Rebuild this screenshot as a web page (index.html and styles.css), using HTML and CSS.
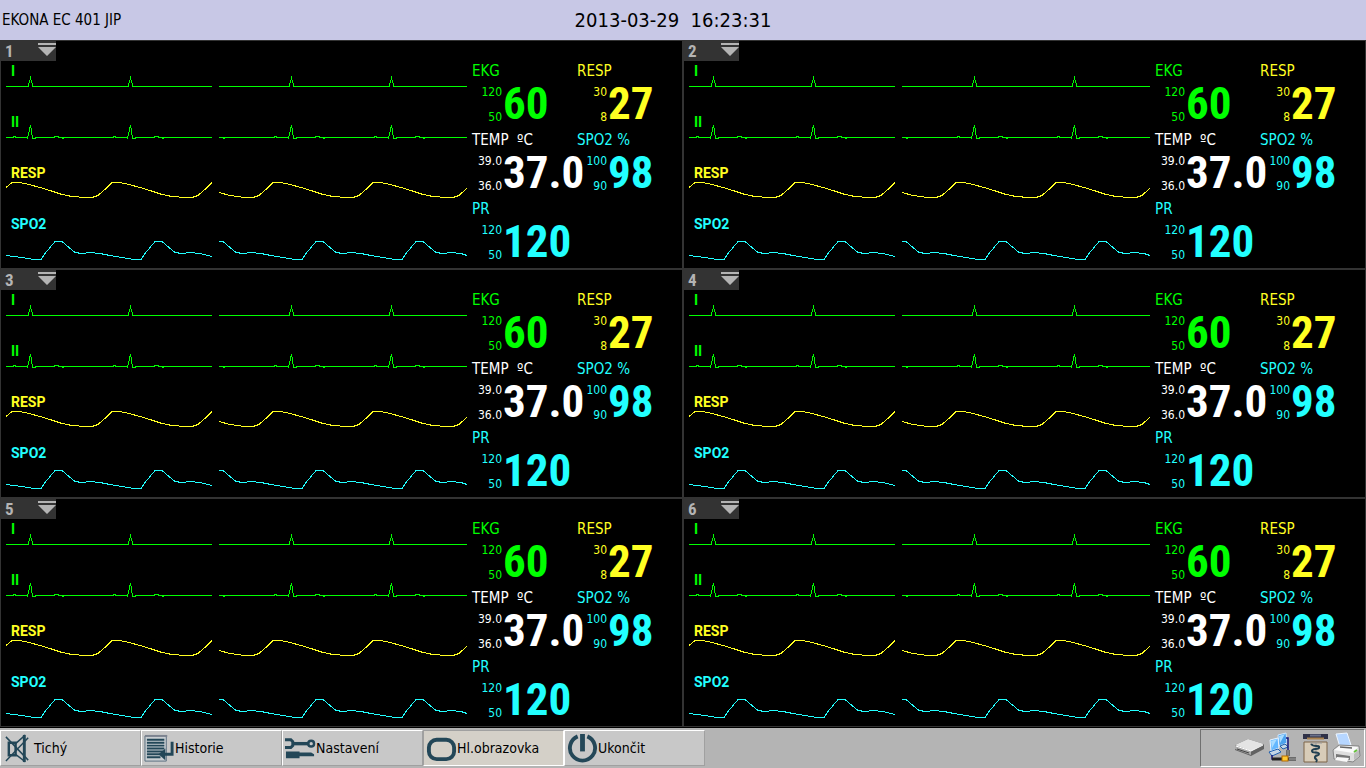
FILE: index.html
```
<!DOCTYPE html>
<html lang="cs">
<head>
<meta charset="utf-8">
<title>EKONA EC 401 JIP</title>
<link rel="stylesheet" href="styles.css">
</head>
<body>
<svg class="defs" aria-hidden="true">
  <symbol id="w-ecg1" viewBox="0 0 461 51" preserveAspectRatio="none">
    <path d="M0 25.5H22L24.5 17L27 25.5H122L124.5 17L127 25.5H206M213 25.5H283L285.5 17L288 25.5H383L385.5 17L388 25.5H461"/>
  </symbol>
  <symbol id="w-ecg2" viewBox="0 0 461 51" preserveAspectRatio="none">
    <path d="M0 25.5H7V24.5H9V25.5H20L21.5 26.5L24.5 13L26.5 26.5H29V25.5H48V24.5H52V25.5H56V26.5H57V25.5H107V24.5H109V25.5H120L121.5 26.5L124.5 13L126.5 26.5H129V25.5H148V24.5H152V25.5H156V26.5H157V25.5H206M213 25.5H217V26.5H218V25.5H268V24.5H270V25.5H281L282.5 26.5L285.5 13L287.5 26.5H290V25.5H309V24.5H313V25.5H317V26.5H318V25.5H368V24.5H370V25.5H381L382.5 26.5L385.5 13L387.5 26.5H390V25.5H409V24.5H413V25.5H417V26.5H418V25.5H461"/>
  </symbol>
  <symbol id="w-resp" viewBox="0 0 461 51" preserveAspectRatio="none">
    <path d="M0 24.5L6 19.5H14L23 21.5L34 24.5L44 27.5L56 31.5L66 33.5L79 34.5H86L92 32.5L100 25.5L106 19.5H114L123 21.5L134 24.5L144 27.5L156 31.5L166 33.5L179 34.5H186L192 32.5L200 25.5L206 19.5M213 29.5L224 32.5L239 34.5H247L253 32.5L261 25.5L267 19.5H275L284 21.5L295 24.5L305 27.5L317 31.5L327 33.5L340 34.5H347L353 32.5L361 25.5L367 19.5H375L384 21.5L395 24.5L405 27.5L417 31.5L427 33.5L440 34.5H447L453 32.5L461 25"/>
  </symbol>
  <symbol id="w-spo2" viewBox="0 0 461 51" preserveAspectRatio="none">
    <path d="M0 41.5L16 43.5L28 45.5H35L39 39.5L49 27.5H56L69 38.5L76 39.5L84 38.5L94 39.5L104 41.5L116 43.5L128 45.5H135L139 39.5L149 27.5H156L169 38.5L176 39.5L184 38.5L194 39.5L206 42.5M213 27.5H217L230 38.5L237 39.5L245 38.5L255 39.5L265 41.5L277 43.5L289 45.5H296L300 39.5L310 27.5H317L330 38.5L337 39.5L345 38.5L355 39.5L365 41.5L377 43.5L389 45.5H396L400 39.5L410 27.5H417L430 38.5L437 39.5L445 38.5L455 39.5L461 41.5"/>
  </symbol>
  <symbol id="i-menu" viewBox="0 0 18 13">
    <path d="M0 0H18V2H0ZM0 4H18L9 13Z"/>
  </symbol>
</svg>

<header class="topbar">
  <h1 class="station">EKONA EC 401 JIP</h1>
  <time class="clock" datetime="2013-03-29T16:23:31">2013-03-29&nbsp; 16:23:31</time>
</header>

<main class="beds">
  <section class="bed">
    <button class="bed-tab" aria-label="Menu 1"><span>1</span><svg><use href="#i-menu"/></svg></button>
    <div class="waves">
      <div class="wave green"><span>I</span><svg><use href="#w-ecg1"/></svg></div>
      <div class="wave green"><span>II</span><svg><use href="#w-ecg2"/></svg></div>
      <div class="wave yellow"><span>RESP</span><svg><use href="#w-resp"/></svg></div>
      <div class="wave cyan"><span>SPO2</span><svg><use href="#w-spo2"/></svg></div>
    </div>
    <div class="vitals">
      <div class="vital green"><h2>EKG</h2><div class="limits"><span>120</span><span>50</span></div><strong>60</strong></div>
      <div class="vital yellow"><h2>RESP</h2><div class="limits"><span>30</span><span>8</span></div><strong>27</strong></div>
      <div class="vital white"><h2>TEMP&nbsp; ºC</h2><div class="limits"><span>39.0</span><span>36.0</span></div><strong>37.0</strong></div>
      <div class="vital cyan"><h2>SPO2 %</h2><div class="limits"><span>100</span><span>90</span></div><strong>98</strong></div>
      <div class="vital cyan"><h2>PR</h2><div class="limits"><span>120</span><span>50</span></div><strong>120</strong></div>
    </div>
  </section>
  <section class="bed">
    <button class="bed-tab" aria-label="Menu 2"><span>2</span><svg><use href="#i-menu"/></svg></button>
    <div class="waves">
      <div class="wave green"><span>I</span><svg><use href="#w-ecg1"/></svg></div>
      <div class="wave green"><span>II</span><svg><use href="#w-ecg2"/></svg></div>
      <div class="wave yellow"><span>RESP</span><svg><use href="#w-resp"/></svg></div>
      <div class="wave cyan"><span>SPO2</span><svg><use href="#w-spo2"/></svg></div>
    </div>
    <div class="vitals">
      <div class="vital green"><h2>EKG</h2><div class="limits"><span>120</span><span>50</span></div><strong>60</strong></div>
      <div class="vital yellow"><h2>RESP</h2><div class="limits"><span>30</span><span>8</span></div><strong>27</strong></div>
      <div class="vital white"><h2>TEMP&nbsp; ºC</h2><div class="limits"><span>39.0</span><span>36.0</span></div><strong>37.0</strong></div>
      <div class="vital cyan"><h2>SPO2 %</h2><div class="limits"><span>100</span><span>90</span></div><strong>98</strong></div>
      <div class="vital cyan"><h2>PR</h2><div class="limits"><span>120</span><span>50</span></div><strong>120</strong></div>
    </div>
  </section>
  <section class="bed">
    <button class="bed-tab" aria-label="Menu 3"><span>3</span><svg><use href="#i-menu"/></svg></button>
    <div class="waves">
      <div class="wave green"><span>I</span><svg><use href="#w-ecg1"/></svg></div>
      <div class="wave green"><span>II</span><svg><use href="#w-ecg2"/></svg></div>
      <div class="wave yellow"><span>RESP</span><svg><use href="#w-resp"/></svg></div>
      <div class="wave cyan"><span>SPO2</span><svg><use href="#w-spo2"/></svg></div>
    </div>
    <div class="vitals">
      <div class="vital green"><h2>EKG</h2><div class="limits"><span>120</span><span>50</span></div><strong>60</strong></div>
      <div class="vital yellow"><h2>RESP</h2><div class="limits"><span>30</span><span>8</span></div><strong>27</strong></div>
      <div class="vital white"><h2>TEMP&nbsp; ºC</h2><div class="limits"><span>39.0</span><span>36.0</span></div><strong>37.0</strong></div>
      <div class="vital cyan"><h2>SPO2 %</h2><div class="limits"><span>100</span><span>90</span></div><strong>98</strong></div>
      <div class="vital cyan"><h2>PR</h2><div class="limits"><span>120</span><span>50</span></div><strong>120</strong></div>
    </div>
  </section>
  <section class="bed">
    <button class="bed-tab" aria-label="Menu 4"><span>4</span><svg><use href="#i-menu"/></svg></button>
    <div class="waves">
      <div class="wave green"><span>I</span><svg><use href="#w-ecg1"/></svg></div>
      <div class="wave green"><span>II</span><svg><use href="#w-ecg2"/></svg></div>
      <div class="wave yellow"><span>RESP</span><svg><use href="#w-resp"/></svg></div>
      <div class="wave cyan"><span>SPO2</span><svg><use href="#w-spo2"/></svg></div>
    </div>
    <div class="vitals">
      <div class="vital green"><h2>EKG</h2><div class="limits"><span>120</span><span>50</span></div><strong>60</strong></div>
      <div class="vital yellow"><h2>RESP</h2><div class="limits"><span>30</span><span>8</span></div><strong>27</strong></div>
      <div class="vital white"><h2>TEMP&nbsp; ºC</h2><div class="limits"><span>39.0</span><span>36.0</span></div><strong>37.0</strong></div>
      <div class="vital cyan"><h2>SPO2 %</h2><div class="limits"><span>100</span><span>90</span></div><strong>98</strong></div>
      <div class="vital cyan"><h2>PR</h2><div class="limits"><span>120</span><span>50</span></div><strong>120</strong></div>
    </div>
  </section>
  <section class="bed">
    <button class="bed-tab" aria-label="Menu 5"><span>5</span><svg><use href="#i-menu"/></svg></button>
    <div class="waves">
      <div class="wave green"><span>I</span><svg><use href="#w-ecg1"/></svg></div>
      <div class="wave green"><span>II</span><svg><use href="#w-ecg2"/></svg></div>
      <div class="wave yellow"><span>RESP</span><svg><use href="#w-resp"/></svg></div>
      <div class="wave cyan"><span>SPO2</span><svg><use href="#w-spo2"/></svg></div>
    </div>
    <div class="vitals">
      <div class="vital green"><h2>EKG</h2><div class="limits"><span>120</span><span>50</span></div><strong>60</strong></div>
      <div class="vital yellow"><h2>RESP</h2><div class="limits"><span>30</span><span>8</span></div><strong>27</strong></div>
      <div class="vital white"><h2>TEMP&nbsp; ºC</h2><div class="limits"><span>39.0</span><span>36.0</span></div><strong>37.0</strong></div>
      <div class="vital cyan"><h2>SPO2 %</h2><div class="limits"><span>100</span><span>90</span></div><strong>98</strong></div>
      <div class="vital cyan"><h2>PR</h2><div class="limits"><span>120</span><span>50</span></div><strong>120</strong></div>
    </div>
  </section>
  <section class="bed">
    <button class="bed-tab" aria-label="Menu 6"><span>6</span><svg><use href="#i-menu"/></svg></button>
    <div class="waves">
      <div class="wave green"><span>I</span><svg><use href="#w-ecg1"/></svg></div>
      <div class="wave green"><span>II</span><svg><use href="#w-ecg2"/></svg></div>
      <div class="wave yellow"><span>RESP</span><svg><use href="#w-resp"/></svg></div>
      <div class="wave cyan"><span>SPO2</span><svg><use href="#w-spo2"/></svg></div>
    </div>
    <div class="vitals">
      <div class="vital green"><h2>EKG</h2><div class="limits"><span>120</span><span>50</span></div><strong>60</strong></div>
      <div class="vital yellow"><h2>RESP</h2><div class="limits"><span>30</span><span>8</span></div><strong>27</strong></div>
      <div class="vital white"><h2>TEMP&nbsp; ºC</h2><div class="limits"><span>39.0</span><span>36.0</span></div><strong>37.0</strong></div>
      <div class="vital cyan"><h2>SPO2 %</h2><div class="limits"><span>100</span><span>90</span></div><strong>98</strong></div>
      <div class="vital cyan"><h2>PR</h2><div class="limits"><span>120</span><span>50</span></div><strong>120</strong></div>
    </div>
  </section>
</main>

<footer class="taskbar">
  <button class="task"><svg viewBox="0 0 32 32"><g fill="none" stroke="#234758"><path d="M6 10H13V23H6Z" stroke-width="2.500"/><path d="M13 11L22 3V29L13 22" stroke-width="1.500"/><path d="M22 2V30" stroke-width="3"/><path d="M3 4L26 28M26 5L3 29" stroke-width="1.500"/></g></svg>Tichý</button>
  <button class="task"><svg viewBox="0 0 32 32"><path d="M1 3H23V29H1Z" fill="#c9ced2" stroke="#5b7080"/><path d="M1 3H24" stroke="#7d8490" stroke-width="2"/><path d="M3 7H21M3 10H21M3 13H21M3 16H21M3 19H20M3 22H17M3 25H17" stroke="#234758" stroke-width="2"/><path d="M29 9V22H20" fill="none" stroke="#234758" stroke-width="3"/><path d="M22 16V28L15 22Z" fill="#234758"/></svg>Historie</button>
  <button class="task"><svg viewBox="0 0 32 32"><g fill="none" stroke="#234758"><path d="M0 7H6L8 9V13L6 15H0" stroke-width="3"/><path d="M8 11H25" stroke-width="3.500"/><circle cx="27" cy="11" r="3" stroke-width="2.500"/></g><path d="M1 19H15V20H27L30 22V24H15V26H1Z" fill="#234758"/></svg>Nastavení</button>
  <button class="task active"><svg viewBox="0 0 32 32"><rect x="3" y="7" width="26" height="20" rx="8" fill="none" stroke="#234758" stroke-width="4"/></svg>Hl.obrazovka</button>
  <button class="task"><svg viewBox="0 0 32 32"><path d="M11 3.500A13 13 0 1 0 21 3.500" fill="none" stroke="#234758" stroke-width="4"/><path d="M16 1V19" stroke="#234758" stroke-width="5"/></svg>Ukončit</button>

  <div class="tray">
    <svg viewBox="0 0 32 32"><path d="M2 13L15 7L31 12V17L18 24L2 18Z" fill="#626262"/><path d="M2 13L15 7L31 12L18 19Z" fill="#e4e4e4"/><path d="M2 13L18 19V23L2 17Z" fill="#a9a9a9"/><path d="M3 14L18 19L30 13" fill="none" stroke="#fff"/><path d="M4 17L16 21" stroke="#444"/></svg>
    <svg viewBox="0 0 32 32"><path d="M12 3L20 1L21 11L13 14Z" fill="#4da2ed" stroke="#d4e7fb"/><path d="M4 8L12 6L13 16L5 19Z" fill="#64b8ff" stroke="#e8f3ff"/><path d="M3 20L12 17L15 20L6 24Z" fill="#c4d6e6" stroke="#1e5fb0"/><path d="M14 14L19 12L22 15L17 17Z" fill="#c4d6e6" stroke="#1e5fb0"/><path d="M13 4L19 2L14 11ZM5 9L11 7L6 16Z" fill="#a9dcff"/><path d="M20 6H22V18M6 23V27H17" fill="none" stroke="#14147a" stroke-width="1.500"/><path d="M22 18V24M6 27H30" stroke="#222" stroke-width="3"/><path d="M22 18V24M23 27H30" stroke="#ddd"/><rect x="16" y="24" width="6" height="5" fill="#ffc933" stroke="#b46a00"/></svg>
    <svg viewBox="0 0 32 32"><path d="M4 2H29V7H4Z" fill="#2f3148"/><path d="M8 6.500H25" stroke="#a9824f" stroke-width="2"/><path d="M11 2.500H22V4.500H11Z" fill="#697089"/><path d="M5 10H28V30H5Z" fill="#d8ccb8" stroke="#7c6548"/><path d="M11 11H23M17 10V28" stroke="#999" stroke-width="1"/><path d="M12 12C15 16 21 12 20 16C19 18 13 16 13 19C13 22 20 19 20 22C20 24 15 23 16 26C17 28 19 27 17 30" fill="none" stroke="#213f50" stroke-width="2"/></svg>
    <svg viewBox="0 0 32 32"><path d="M4 2L15 1L19 13L8 15Z" fill="#b6d6ff" stroke="#eef6ff"/><path d="M1 18L7 13L27 14L28 24L21 30L2 27Z" fill="#dedede" stroke="#858585"/><path d="M2 18L8 14L26 15L21 21Z" fill="#fafafa"/><path d="M8 15L20 16" stroke="#666" stroke-width="1.500"/><path d="M4 22L18 24V28L4 26Z" fill="#777"/><path d="M5 25L17 26L15 30L3 28Z" fill="#f8f8f8"/><path d="M22 22L27 18V24L22 28Z" fill="#bcbcbc"/><path d="M22 20L25 18" stroke="#65c33b" stroke-width="2"/></svg>
  </div>
</footer>
</body>
</html>
```
FILE: styles.css
```
* { box-sizing: border-box; }

body {
  margin: 0;
  min-height: 100vh;
  display: flex;
  flex-direction: column;
  background: #000;
  color: #000;
  font-family: "DejaVu Sans Condensed", "Noto Sans", sans-serif;
  font-size: 14px;
}

h1, h2 { margin: 0; font-weight: normal; }
button { font: inherit; border: 0; padding: 0; color: inherit; text-align: left; }
.defs { position: absolute; width: 0; height: 0; }

.topbar {
  display: grid;
  grid-template-columns: 1fr auto 1fr;
  align-items: center;
  height: 40px;
  padding: 0 22px 0 2px;
  background: #c8c8e6;
}
.station { font-size: 15px; }
.clock { font-size: 20px; }

.beds {
  flex: 1;
  display: grid;
  grid-template-columns: repeat(2, minmax(0, 1fr));
  grid-auto-rows: 1fr;
}
.bed {
  display: grid;
  grid-template-columns: minmax(0, 1fr) 210px;
  grid-template-rows: 20px auto;
  border: 1px solid #333;
}
.bed-tab {
  grid-column: 1 / -1;
  display: flex;
  justify-content: space-between;
  align-items: center;
  width: 55px;
  padding-left: 4px;
  background: #333;
  color: #b4b4b4;
  font-family: "Roboto Condensed", "Liberation Sans", sans-serif;
  font-size: 17px;
  font-weight: bold;
  line-height: 20px;
}
.bed-tab svg { width: 18px; height: 13px; margin-bottom: 3px; fill: currentColor; }

.green { color: #0f0; }
.yellow { color: #ff2; }
.cyan { color: #2ff; }
.white { color: #fff; }

.waves { padding: 0 5px; }
.wave { display: grid; height: 51px; }
.wave > * { grid-area: 1 / 1; }
.wave span {
  padding: 2px 5px;
  font-family: Roboto, sans-serif;
  font-size: 14px;
  font-weight: 700;
  line-height: 16px;
}
.wave svg {
  width: 100%;
  height: 51px;
  fill: none;
  stroke: currentColor;
  stroke-width: 1px;
  shape-rendering: crispEdges;
}

.vitals {
  display: grid;
  grid-template-columns: 105px 105px;
  grid-auto-rows: 69px;
  align-content: start;
}
.vital {
  display: grid;
  grid-template-columns: 30px auto;
  grid-template-rows: 19px 50px;
  column-gap: 1px;
}
.vital h2 { grid-column: 1 / -1; font-size: 15px; line-height: 21px; white-space: nowrap; }
.limits {
  display: flex;
  flex-direction: column;
  align-items: flex-end;
  font-size: 12px;
  line-height: 25px;
}
.vital strong {
  font-family: "Roboto Condensed", "Liberation Sans", sans-serif;
  font-size: 45px;
  line-height: 48px;
}

.taskbar {
  display: flex;
  align-items: center;
  height: 41px;
  border-top: 1px solid #000;
  background: #b4b4b4;
}
.task {
  display: flex;
  align-items: center;
  width: 141px;
  height: 36px;
  padding-left: 2px;
  background: #c8c8c8;
  border: 1px solid;
  border-color: #fff #a0a0a0 #a0a0a0 #fff;
}
.task.active { background: #d4d0c8; border-color: #a0a0a0 #fff #fff #a0a0a0; }
.task svg { flex: none; width: 31px; height: 31px; }

.tray {
  display: flex;
  align-items: center;
  justify-content: flex-end;
  gap: 1px;
  width: 165px;
  height: 38px;
  margin-left: auto;
  margin-right: 1px;
  border: 1px solid;
  border-color: #707070 #fff #fff #707070;
}
.tray svg { width: 32px; height: 32px; }
```
